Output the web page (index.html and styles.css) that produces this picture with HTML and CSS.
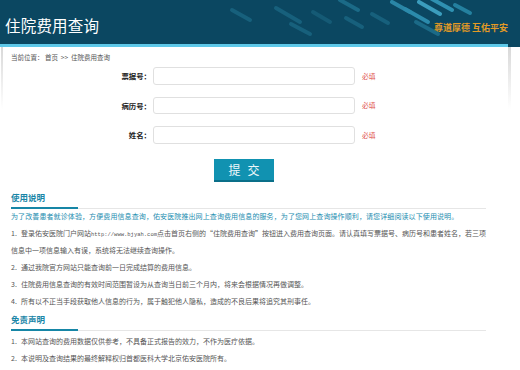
FILE: index.html
```html
<!DOCTYPE html>
<html>
  <head>
    <meta charset="utf-8">
    <title>住院费用查询</title>
    <link rel="stylesheet" href="styles.css">
  </head>
  <body>
    <div class="header">
      <svg class="streaks" width="520" height="47" viewBox="0 0 520 47">
        <g stroke-linecap="round" stroke-width="4" fill="none">
          <line x1="232" y1="10" x2="250" y2="20" stroke="#17607c" />
          <line x1="276" y1="8" x2="300" y2="22" stroke="#17607c" />
          <line x1="291" y1="24" x2="310" y2="34" stroke="#17607c" />
          <line x1="313" y1="12" x2="330" y2="22" stroke="#155a75" />
          <line x1="340" y1="0" x2="358" y2="10" stroke="#1b6a87" />
          <line x1="346" y1="18" x2="362" y2="27" stroke="#17607c" />
          <line x1="392" y1="2" x2="410" y2="12" stroke="#2a86a6" />
          <line x1="405" y1="9" x2="428" y2="22" stroke="#2b8aab" />
          <line x1="419" y1="2" x2="440" y2="14" stroke="#3b9dbd" />
          <line x1="432" y1="-1" x2="452" y2="10" stroke="#2f91b1" />
          <line x1="416" y1="22" x2="438" y2="34" stroke="#1b6a87" />
          <line x1="455" y1="5" x2="470" y2="13" stroke="#24809f" />
          <line x1="372" y1="14" x2="388" y2="23" stroke="#17607c" />
        </g>
      </svg>
      <div class="header-top">
        <h1 class="title">住院费用查询</h1>
        <div class="slogan">尊道厚德 互佑平安</div>
      </div>
      <div class="strip"></div>
    </div>

    <div class="main">
      <div class="crumb">当前位置：&nbsp;首页&nbsp;&nbsp;&gt;&gt;&nbsp;&nbsp;住院费用查询</div>

      <form class="query-form">
        <div class="row">
          <label class="label">票据号：</label>
          <input type="text" class="field" />
          <span class="req">必填</span>
        </div>
        <div class="row">
          <label class="label">病历号：</label>
          <input type="text" class="field" />
          <span class="req">必填</span>
        </div>
        <div class="row">
          <label class="label">姓名：</label>
          <input type="text" class="field" />
          <span class="req">必填</span>
        </div>
        <div class="actions">
          <button type="button" class="submit">提交</button>
        </div>
      </form>

      <div class="section">
        <div class="sec-title"><span>使用说明</span></div>
        <p class="intro">为了改善患者就诊体验，方便费用信息查询，佑安医院推出网上查询费用信息的服务，为了您网上查询操作顺利，请您详细阅读以下使用说明。</p>
        <ul class="notes">
          <li><span class="num">1.</span>登录佑安医院门户网站<span class="url">http://www.bjyah.com</span>点击首页右侧的“住院费用查询”按钮进入费用查询页面。请认真填写票据号、病历号和患者姓名，若三项信息中一项信息输入有误，系统将无法继续查询操作。</li>
          <li><span class="num">2.</span>通过我院官方网站只能查询前一日完成结算的费用信息。</li>
          <li><span class="num">3.</span>住院费用信息查询的有效时间范围暂设为从查询当日前三个月内，将来会根据情况再做调整。</li>
          <li><span class="num">4.</span>所有以不正当手段获取他人信息的行为，属于触犯他人隐私，造成的不良后果将追究其刑事任。</li>
        </ul>

        <div class="sec-title second"><span>免责声明</span></div>
        <ul class="notes first-list">
          <li><span class="num">1.</span>本网站查询的费用数据仅供参考，不具备正式报告的效力，不作为医疗依据。</li>
          <li><span class="num">2.</span>本说明及查询结果的最终解释权归首都医科大学北京佑安医院所有。</li>
        </ul>
      </div>
    </div>
  </body>
</html>
```

FILE: styles.css
```css
body {
  margin: 0;
  background-color: white;
  font-family: "Noto Sans CJK SC", "Liberation Sans", sans-serif;
  color: #555;
}
.header {
  position: relative;
  height: 47px;
  background-color: #0b4761;
  overflow: hidden;
}
.streaks {
  position: absolute;
  top: 0;
  left: 0;
}
.header-top {
  position: relative;
  height: 44px;
  display: flex;
  align-items: center;
  justify-content: space-between;
  padding: 0 12px 0 5px;
}
.title {
  margin: 0;
  font-size: 15.5px;
  font-weight: normal;
  color: white;
  letter-spacing: 0.2px;
  padding-top: 5px;
}
.slogan {
  font-size: 9px;
  font-weight: bold;
  color: #e29a26;
  padding-top: 10px;
}
.strip {
  position: relative;
  width: 508px;
  height: 3px;
  background-color: #5ec8e8;
}
.main {
  position: relative;
  width: 508px;
}
.main:before,
.main:after {
  content: "";
  position: absolute;
  top: 0;
  height: 62px;
  width: 2px;
  background: linear-gradient(#d8d8d8, rgba(230, 230, 230, 0));
}
.main:before {
  left: 1px;
}
.main:after {
  right: -3px;
  width: 3px;
}
.crumb {
  padding: 5px 11px 0;
  font-size: 6.5px;
  line-height: 10px;
  color: #555;
}
.query-form {
  margin: 0;
  padding-top: 5px;
}
.row {
  display: flex;
  align-items: center;
  height: 17.5px;
  margin-bottom: 12px;
}
.label {
  width: 151px;
  text-align: right;
  font-size: 7.4px;
  font-weight: bold;
  color: #222;
}
.field {
  box-sizing: border-box;
  width: 202px;
  height: 17.5px;
  margin: 0 0 0 2px;
  padding: 0 4px;
  border: 1px solid #e0e0e0;
  border-radius: 3px;
  background-color: white;
}
.req {
  margin-left: 7px;
  font-size: 6.8px;
  color: #e0504c;
}
.actions {
  padding-left: 214px;
  margin-top: 0.5px;
}
.submit {
  box-sizing: border-box;
  width: 60px;
  height: 23px;
  padding: 0 0 0 7px;
  border: none;
  border-bottom: 2px solid #0a6f89;
  background-color: #1192b1;
  color: #eef8fb;
  font-family: "Noto Sans CJK SC", sans-serif;
  font-size: 12px;
  letter-spacing: 7px;
  cursor: pointer;
}
.section {
  padding: 0 22px 0 11px;
}
.sec-title {
  display: flex;
  margin-top: 9px;
  border-bottom: 1px solid #e6e6e6;
}
.sec-title span {
  width: 67px;
  padding-bottom: 4px;
  margin-bottom: -1px;
  border-bottom: 2px solid #1686a6;
  font-size: 8.5px;
  line-height: 12px;
  font-weight: bold;
  color: #1a86a7;
}
.sec-title.second {
  margin-top: 3.5px;
}
.intro {
  margin: -1px 0 0;
  font-size: 7px;
  line-height: 17px;
  color: #1b8db0;
  letter-spacing: 0.1px;
}
.notes {
  list-style: none;
  margin: 0 -4px 0 0;
  padding: 0;
  font-size: 7px;
  line-height: 17px;
  color: #555;
}
.notes.first-list {
  margin-top: 2px;
}
.num {
  display: inline-block;
  width: 10px;
}
.url {
  font-family: "Liberation Mono", monospace;
  font-size: 5.5px;
  line-height: 10px;
}
```
